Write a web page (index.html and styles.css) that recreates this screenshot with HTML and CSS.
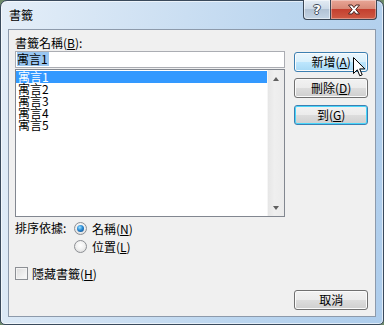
FILE: index.html
```html
<!DOCTYPE html>
<html lang="zh-Hant">
<head>
    <meta charset="UTF-8">
    <title>書籤</title>
    <link rel="stylesheet" href="styles.css">
</head>
<body>
    <div class="window">
        <div class="titlebar">
            <span class="title">書籤</span>
            <div class="caption-btns">
                <div class="cap help">?</div>
                <div class="cap close">
                    <svg width="14" height="11" viewBox="0 0 14 11">
                        <path d="M1.5 1 L5 1 L7 3.6 L9 1 L12.5 1 L8.8 5.5 L12.5 10 L9 10 L7 7.4 L5 10 L1.5 10 L5.2 5.5 Z"
                              fill="#fff" stroke="#4a2420" stroke-width="1" stroke-linejoin="round"/>
                    </svg>
                </div>
            </div>
        </div>

        <div class="client">
            <div class="main">
                <div class="label">書籤名稱(<u>B</u>):</div>
                <div class="textbox"><span class="sel">寓言1</span></div>
                <div class="listbox">
                    <ul class="items">
                        <li class="selected">寓言1</li>
                        <li>寓言2</li>
                        <li>寓言3</li>
                        <li>寓言4</li>
                        <li>寓言5</li>
                    </ul>
                    <div class="scrollbar">
                        <div class="sb-btn"><span class="arrow up"></span></div>
                        <div class="sb-btn"><span class="arrow down"></span></div>
                    </div>
                </div>
                <div class="sort">
                    <span class="sort-label">排序依據:</span>
                    <div class="radios">
                        <div class="option"><span class="radio checked"></span>名稱(<u>N</u>)</div>
                        <div class="option"><span class="radio"></span>位置(<u>L</u>)</div>
                    </div>
                </div>
                <div class="option check-row"><span class="checkbox"></span>隱藏書籤(<u>H</u>)</div>
            </div>

            <div class="side">
                <div class="btn hover">新增(<u>A</u>)</div>
                <div class="btn">刪除(<u>D</u>)</div>
                <div class="btn default">到(<u>G</u>)</div>
                <div class="btn cancel">取消</div>
            </div>
        </div>

        <!-- mouse pointer over the add button -->
        <svg class="cursor" width="13" height="21" viewBox="0 0 13 21">
            <path d="M0.5 0.5 L0.5 16.5 L4.3 12.8 L6.8 18.8 L9.2 17.8 L6.7 11.9 L11.8 11.9 Z"
                  fill="#fff" stroke="#000" stroke-width="1" stroke-linejoin="miter"/>
        </svg>
    </div>
</body>
</html>
```

FILE: styles.css
```css
* {
    margin: 0;
    padding: 0;
    box-sizing: border-box;
}

body {
    width: 384px;
    height: 325px;
    overflow: hidden;
    background: #6d8a6a;
    font-family: "Noto Sans CJK TC", "Liberation Sans", sans-serif;
    font-size: 12px;
    color: #000;
}

u {
    text-decoration: underline;
    text-underline-offset: 1px;
}

.window {
    position: relative;
    width: 384px;
    height: 325px;
    border: 1px solid #3a4a5c;
    border-radius: 7px 7px 5px 5px;
    background: linear-gradient(100deg, #e4eef8 0%, #cfe1f3 35%, #bcd6ef 65%, #aecdec 100%);
    box-shadow: inset 0 0 0 1px rgba(255, 255, 255, 0.6);
}

.titlebar {
    height: 28px;
    display: flex;
    justify-content: space-between;
    align-items: flex-start;
}

.title {
    padding: 6px 0 0 8px;
    line-height: 16px;
    font-size: 12px;
}

.caption-btns {
    display: flex;
    margin-right: 6px;
    margin-top: -1px;
}

.cap {
    height: 20px;
    border: 1px solid #3b4654;
    border-top: none;
    display: flex;
    justify-content: center;
    align-items: center;
}

.help {
    width: 27px;
    border-right: none;
    border-radius: 0 0 0 4px;
    background: linear-gradient(#e4ecf4 0%, #cbd8e6 50%, #b2c2d4 50%, #c4d4e4 100%);
    box-shadow: inset 0 0 0 1px rgba(255, 255, 255, 0.5);
    color: #fff;
    font-family: "DejaVu Sans", sans-serif;
    font-weight: bold;
    font-size: 13px;
    text-shadow: -1px 0 #3d4a5a, 1px 0 #3d4a5a, 0 -1px #3d4a5a, 0 1px #3d4a5a;
}

.close {
    width: 47px;
    border-radius: 0 0 4px 0;
    background: linear-gradient(#e8a696 0%, #d88a78 45%, #c4402f 50%, #cf5a44 100%);
    box-shadow: inset 0 0 0 1px rgba(255, 255, 255, 0.35);
}

.client {
    height: 288px;
    margin: 0 7px;
    border: 1px solid #8d9aab;
    background: #f0f0f0;
    padding: 6px 7px 6px 6px;
    display: flex;
    gap: 9px;
}

.main {
    width: 272px;
    display: flex;
    flex-direction: column;
}

.label {
    height: 15px;
    line-height: 14px;
}

.textbox {
    height: 17px;
    margin-bottom: 1px;
    border: 1px solid #abadb3;
    background: #fff;
    padding: 0 1px;
    line-height: 14px;
}

.sel {
    background: #99c6f0;
    display: inline-block;
    line-height: 14px;
    padding-right: 1px;
}

.listbox {
    height: 148px;
    border: 1px solid #828790;
    background: #fff;
    display: flex;
}

.items {
    flex: 1;
    list-style: none;
    padding-top: 1px;
}

.items li {
    height: 12px;
    line-height: 12px;
    padding-left: 2px;
}

.items li.selected {
    background: #3399ff;
    color: #fff;
}

.scrollbar {
    width: 17px;
    background: linear-gradient(to right, #e6e6e6, #efefef 40%, #ebebeb);
    border-left: 1px solid #f6f6f6;
    display: flex;
    flex-direction: column;
    justify-content: space-between;
}

.sb-btn {
    height: 17px;
    display: flex;
    justify-content: center;
    align-items: center;
}

.arrow {
    width: 0;
    height: 0;
    border-left: 3.5px solid transparent;
    border-right: 3.5px solid transparent;
}

.arrow.up {
    border-bottom: 4px solid #606060;
}

.arrow.down {
    border-top: 4px solid #606060;
}

.sort {
    display: flex;
    margin-top: 2px;
}

.sort-label {
    width: 59px;
    line-height: 17px;
}

.option {
    display: flex;
    align-items: center;
    height: 18px;
    line-height: 17px;
}

.radio {
    width: 13px;
    height: 13px;
    border-radius: 50%;
    border: 1px solid #8c8f94;
    background: radial-gradient(circle at 50% 40%, #ffffff 0%, #f0f0f0 50%, #d2d2d2 100%);
    margin-right: 5px;
    display: flex;
    justify-content: center;
    align-items: center;
}

.radio.checked::after {
    content: "";
    width: 7px;
    height: 7px;
    border-radius: 50%;
    background: radial-gradient(circle at 40% 35%, #9fe3ff 0%, #2a8ad4 45%, #0c3f7a 100%);
}

.check-row {
    margin-top: 9px;
}

.checkbox {
    width: 13px;
    height: 13px;
    border: 1px solid #8c8f94;
    background: linear-gradient(135deg, #dcdcdc, #fbfbfb);
    box-shadow: inset 0 0 0 1px #f4f4f4;
    margin-right: 4px;
}

.side {
    width: 74px;
    padding-top: 16px;
    display: flex;
    flex-direction: column;
}

.btn {
    height: 20px;
    margin-bottom: 6px;
    border: 1px solid #707070;
    border-radius: 3px;
    background: linear-gradient(#f2f2f2 0%, #ebebeb 50%, #dddddd 50%, #cfcfcf 100%);
    box-shadow: inset 0 0 0 1px #fbfbfb;
    text-align: center;
    line-height: 17px;
}

.btn.hover {
    border-color: #3c7fb1;
    background: linear-gradient(#eaf6fd 0%, #d9f0fc 50%, #bee6fd 50%, #a7d9f5 100%);
}

.btn:nth-child(2) {
    margin-bottom: 7px;
}

.btn.default {
    border-color: #3c7fb1;
    box-shadow: inset 0 0 0 1px #48d6fb;
}

.btn.cancel {
    margin-top: auto;
    margin-bottom: 0;
}

.cursor {
    position: absolute;
    left: 352px;
    top: 56px;
}
```
